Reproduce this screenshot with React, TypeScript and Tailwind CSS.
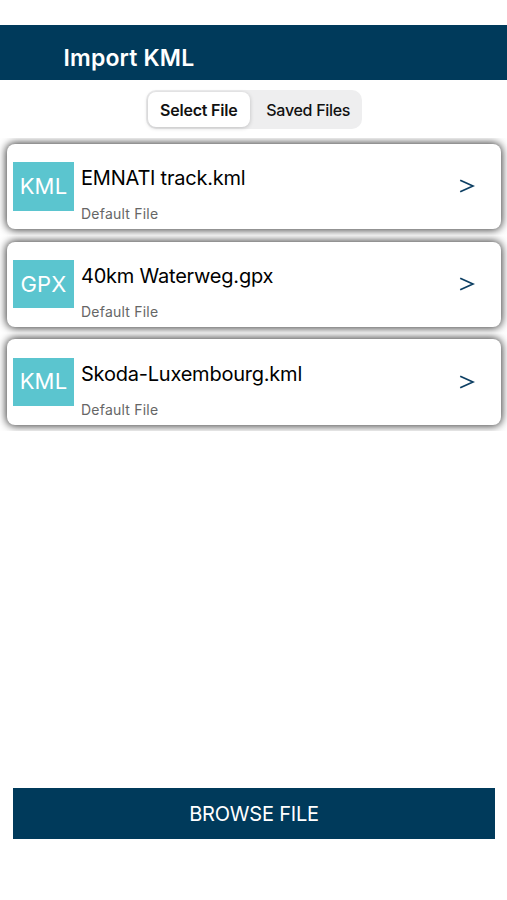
import { useState } from 'react'
import clsx from 'clsx'

type TrackFile = {
  name: string
  kind: 'KML' | 'GPX'
  source: string
}

const FILES: TrackFile[] = [
  { name: 'EMNATI track.kml', kind: 'KML', source: 'Default File' },
  { name: '40km Waterweg.gpx', kind: 'GPX', source: 'Default File' },
  { name: 'Skoda-Luxembourg.kml', kind: 'KML', source: 'Default File' },
]

const TABS = ['Select File', 'Saved Files']

function Tabs({ active, onChange }: { active: string; onChange: (tab: string) => void }) {
  return (
    <div className="flex h-[39px] w-[216px] rounded-[10px] bg-[#eeeeef] p-[2px]">
      {TABS.map((tab) => (
        <button
          key={tab}
          onClick={() => onChange(tab)}
          className={clsx(
            'flex-1 rounded-lg pt-[1px] text-[16px] whitespace-nowrap text-[#111]',
            tab === active
              ? 'max-w-[103px] bg-white font-semibold tracking-[-0.2px] shadow-[0_1px_4px_rgba(0,0,0,0.2)]'
              : 'pl-[7px] font-medium tracking-[-0.3px]',
          )}
        >
          {tab}
        </button>
      ))}
    </div>
  )
}

function FileRow({ file }: { file: TrackFile }) {
  return (
    <li className="h-[97.6px] overflow-hidden pt-[6px] pr-[6px] pb-[6.2px] pl-[7px]">
      <div className="flex h-full items-start rounded-lg bg-white pl-[6px] shadow-[0_0_8px_1px_rgba(0,0,0,0.78)]">
        <div className="mt-[18.4px] flex h-[48.5px] w-[61px] items-center justify-center bg-[#5bc5cf] text-[22px] tracking-[0.2px] text-white">
          {file.kind}
        </div>
        <div className="ml-[7px] flex-1 pt-[20.4px]">
          <p className="text-[20px] leading-7 tracking-[-0.22px] text-black">{file.name}</p>
          <p className="mt-[12px] text-[14px] leading-5 tracking-[0.22px] text-[#666]">{file.source}</p>
        </div>
        <svg className="mt-[35.4px] mr-[26.5px] h-[14px] w-[16px]" viewBox="0 0 16 14" fill="none" stroke="#0d3f63" strokeWidth="1.8">
          <path d="M1.2 1.2 14 7 1.2 12.8" />
        </svg>
      </div>
    </li>
  )
}

export default function App() {
  const [tab, setTab] = useState('Select File')

  return (
    <div className="flex h-[900px] w-[507px] flex-col bg-white pt-[25px] font-['Inter',sans-serif]">
      <header className="flex h-[55px] items-end bg-[#003a5b] pb-[6px] pl-[63.5px]">
        <h1 className="text-[23px] leading-8 font-semibold tracking-[0.15px] text-white">Import KML</h1>
      </header>

      <div className="flex justify-center pt-[10px] pb-[9px]">
        <Tabs active={tab} onChange={setTab} />
      </div>

      <ul className="flex-1">
        {FILES.map((file) => (
          <FileRow key={file.name} file={file} />
        ))}
      </ul>

      <button className="mr-[12px] mb-[61px] ml-[13px] h-[51px] bg-[#003a5b] text-[20px] tracking-[-0.2px] text-white">
        BROWSE FILE
      </button>
    </div>
  )
}
